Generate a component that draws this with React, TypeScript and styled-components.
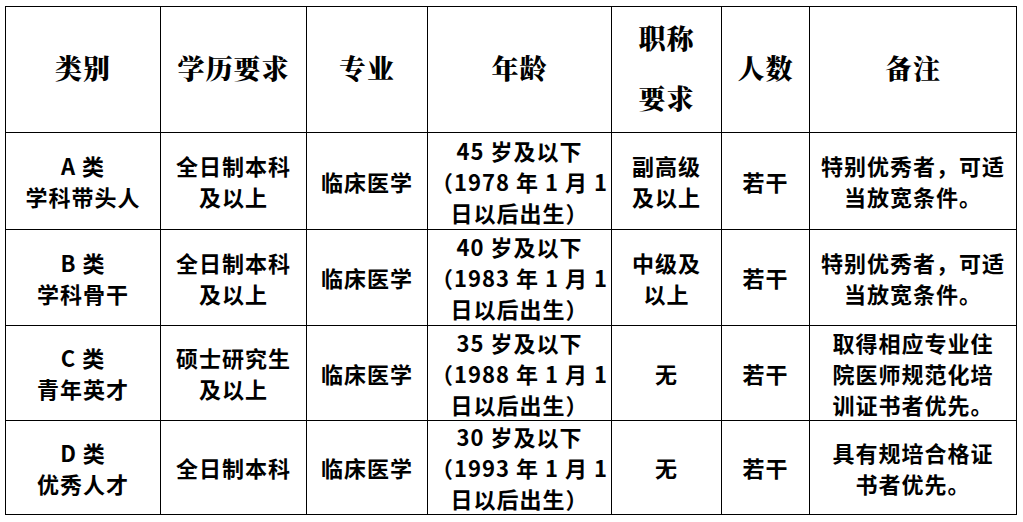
import React from "react";
import styled, { createGlobalStyle } from "styled-components";

const Global = createGlobalStyle`
  html, body { margin: 0; padding: 0; background: #ffffff; }
  body { font-family: "Noto Sans CJK SC", "Liberation Sans", sans-serif; color: #000; }
`;

const Page = styled.div`
  padding: 6px 0 0 5px;
`;

const Table = styled.table`
  border-collapse: collapse;
  table-layout: fixed;
  width: 1011px;
`;

const HeadCell = styled.th`
  border: 1px solid #000;
  height: 121px;
  padding: 0 0 4px 0;
  text-align: center;
  vertical-align: middle;
  font-family: "Noto Serif CJK SC", "Noto Serif CJK", "Noto Sans CJK SC", serif;
  font-weight: 900;
  font-size: 27px;
  line-height: 60px;
  letter-spacing: 1px;
`;

const Row = styled.tr<{ $h: number }>`
  height: ${(p) => p.$h}px;
`;

const Cell = styled.td`
  border: 1px solid #000;
  padding: 0;
  text-align: center;
  vertical-align: middle;
  font-family: "Noto Sans CJK SC", "Liberation Sans", sans-serif;
  font-weight: 700;
  font-size: 22px;
  line-height: 31px;
  letter-spacing: 1px;
`;

const widths = [155, 146, 121, 184, 110, 88, 207];

type RowData = {
  cat: [string, string];
  edu: string[];
  age: [string, string];
  title: string[];
  note: string[];
};

const rows: RowData[] = [
  {
    cat: ["A 类", "学科带头人"],
    edu: ["全日制本科", "及以上"],
    age: ["45", "1978"],
    title: ["副高级", "及以上"],
    note: ["特别优秀者，可适", "当放宽条件。"],
  },
  {
    cat: ["B 类", "学科骨干"],
    edu: ["全日制本科", "及以上"],
    age: ["40", "1983"],
    title: ["中级及", "以上"],
    note: ["特别优秀者，可适", "当放宽条件。"],
  },
  {
    cat: ["C 类", "青年英才"],
    edu: ["硕士研究生", "及以上"],
    age: ["35", "1988"],
    title: ["无"],
    note: ["取得相应专业住", "院医师规范化培", "训证书者优先。"],
  },
  {
    cat: ["D 类", "优秀人才"],
    edu: ["全日制本科"],
    age: ["30", "1993"],
    title: ["无"],
    note: ["具有规培合格证", "书者优先。"],
  },
];

const heights = [97, 96, 95, 94];

const Lines = ({ items }: { items: string[] }) => (
  <>
    {items.map((t, i) => (
      <React.Fragment key={i}>
        {i > 0 && <br />}
        {t}
      </React.Fragment>
    ))}
  </>
);

export default function App() {
  return (
    <>
      <Global />
      <Page>
        <Table>
          <colgroup>
            {widths.map((w, i) => (
              <col key={i} style={{ width: w }} />
            ))}
          </colgroup>
          <thead>
            <tr>
              <HeadCell>类别</HeadCell>
              <HeadCell>学历要求</HeadCell>
              <HeadCell>专业</HeadCell>
              <HeadCell>年龄</HeadCell>
              <HeadCell>
                职称
                <br />
                要求
              </HeadCell>
              <HeadCell>人数</HeadCell>
              <HeadCell>备注</HeadCell>
            </tr>
          </thead>
          <tbody>
            {rows.map((r, i) => (
              <Row key={i} $h={heights[i]}>
                <Cell>
                  <Lines items={r.cat} />
                </Cell>
                <Cell>
                  <Lines items={r.edu} />
                </Cell>
                <Cell>临床医学</Cell>
                <Cell>
                  <Lines
                    items={[
                      `${r.age[0]} 岁及以下`,
                      `（${r.age[1]} 年 1 月 1`,
                      "日以后出生）",
                    ]}
                  />
                </Cell>
                <Cell>
                  <Lines items={r.title} />
                </Cell>
                <Cell>若干</Cell>
                <Cell>
                  <Lines items={r.note} />
                </Cell>
              </Row>
            ))}
          </tbody>
        </Table>
      </Page>
    </>
  );
}
